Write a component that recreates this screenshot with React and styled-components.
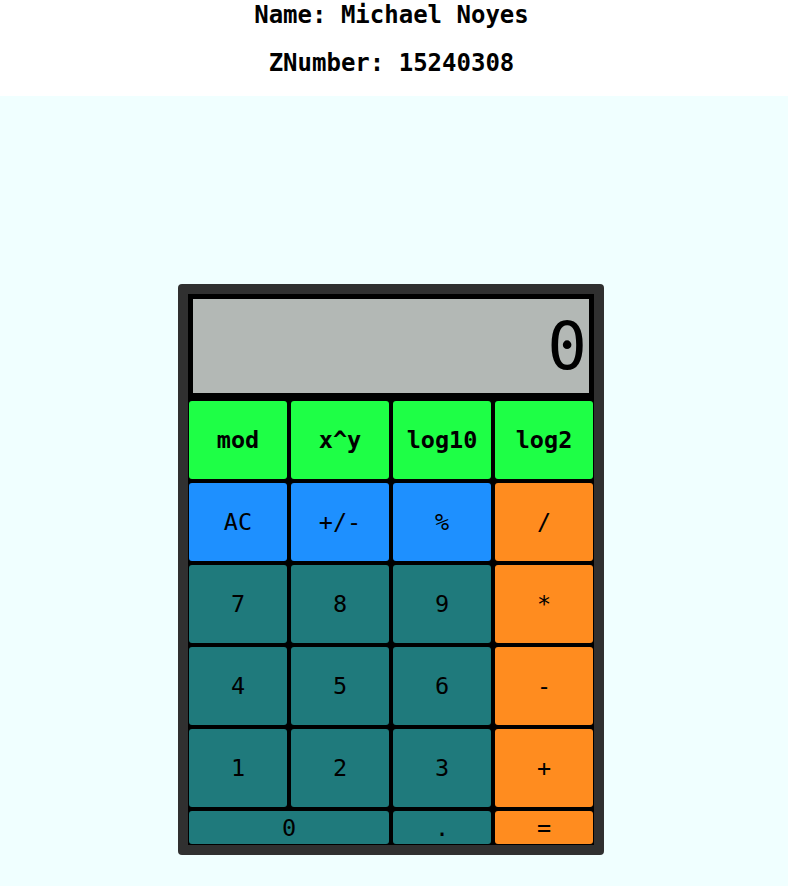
import React, { useState } from 'react';
import styled, { createGlobalStyle } from 'styled-components';

const GlobalStyle = createGlobalStyle`
  body {
    margin: 0;
    background: #ffffff;
    font-family: "DejaVu Sans Mono", "Liberation Mono", monospace;
  }
`;

const keys = [
  { label: 'mod', kind: 'func' },
  { label: 'x^y', kind: 'func' },
  { label: 'log10', kind: 'func' },
  { label: 'log2', kind: 'func' },
  { label: 'AC', kind: 'util' },
  { label: '+/-', kind: 'util' },
  { label: '%', kind: 'util' },
  { label: '/', kind: 'op' },
  { label: '7', kind: 'num' },
  { label: '8', kind: 'num' },
  { label: '9', kind: 'num' },
  { label: '*', kind: 'op' },
  { label: '4', kind: 'num' },
  { label: '5', kind: 'num' },
  { label: '6', kind: 'num' },
  { label: '-', kind: 'op' },
  { label: '1', kind: 'num' },
  { label: '2', kind: 'num' },
  { label: '3', kind: 'num' },
  { label: '+', kind: 'op' },
  { label: '0', kind: 'num', wide: true },
  { label: '.', kind: 'num' },
  { label: '=', kind: 'op' }
];

const colors = {
  func: '#1eff46',
  util: '#1e90ff',
  op: '#ff8c1f',
  num: '#1f7a7c'
};

const App = () => {
  const [display, setDisplay] = useState('0');

  const handleClick = label => {
    if (label === 'AC') setDisplay('0');
    else if (/[0-9]/.test(label)) {
      setDisplay(display === '0' ? label : display + label);
    }
  };

  return (
    <>
      <GlobalStyle />
      <Header>
        <Title>Name: Michael Noyes</Title>
        <Title>ZNumber: 15240308</Title>
      </Header>
      <Main>
        <Calculator>
          <Screen>{display}</Screen>
          <Keypad>
            {keys.map(k => (
              <Key
                key={k.label}
                $kind={k.kind}
                $wide={k.wide}
                onClick={() => handleClick(k.label)}
              >
                {k.label}
              </Key>
            ))}
          </Keypad>
        </Calculator>
      </Main>
    </>
  );
};

export default App;

const Header = styled.header`
  display: flex;
  flex-direction: column;
  align-items: center;
  gap: 18px;
  height: 96px;
  padding-right: 5px;
  box-sizing: border-box;
`;

const Title = styled.h3`
  margin: 0;
  font-size: 24px;
  line-height: 30px;
  font-weight: bold;
  color: #000;
`;

const Main = styled.main`
  display: flex;
  justify-content: center;
  align-items: flex-start;
  background: #f0ffff;
  min-height: 790px;
  padding: 188px 6px 0 0;
  box-sizing: border-box;
`;

const Calculator = styled.div`
  width: 426px;
  box-sizing: border-box;
  padding: 10px;
  background: #303030;
  border-radius: 4px;
`;

const Screen = styled.div`
  height: 94px;
  border: 5px solid #000;
  border-bottom-width: 4px;
  background: #b3b8b5;
  color: #000;
  font-size: 66px;
  line-height: 96px;
  text-align: right;
  padding-right: 2px;
  overflow: hidden;
`;

const Keypad = styled.div`
  display: grid;
  grid-template-columns: repeat(4, 98px);
  grid-template-rows: repeat(5, 78px) 33px;
  gap: 4px;
  padding: 4px 1px 1px;
  background: #000;
`;

const Key = styled.button`
  grid-column: ${p => (p.$wide ? 'span 2' : 'auto')};
  border: none;
  border-radius: 3px;
  padding: 0;
  background: ${p => colors[p.$kind]};
  color: #000;
  font-family: "DejaVu Sans Mono", "Liberation Mono", monospace;
  font-size: 23.5px;
  font-weight: ${p => (p.$kind === 'func' ? 'bold' : 'normal')};
  cursor: pointer;
`;
